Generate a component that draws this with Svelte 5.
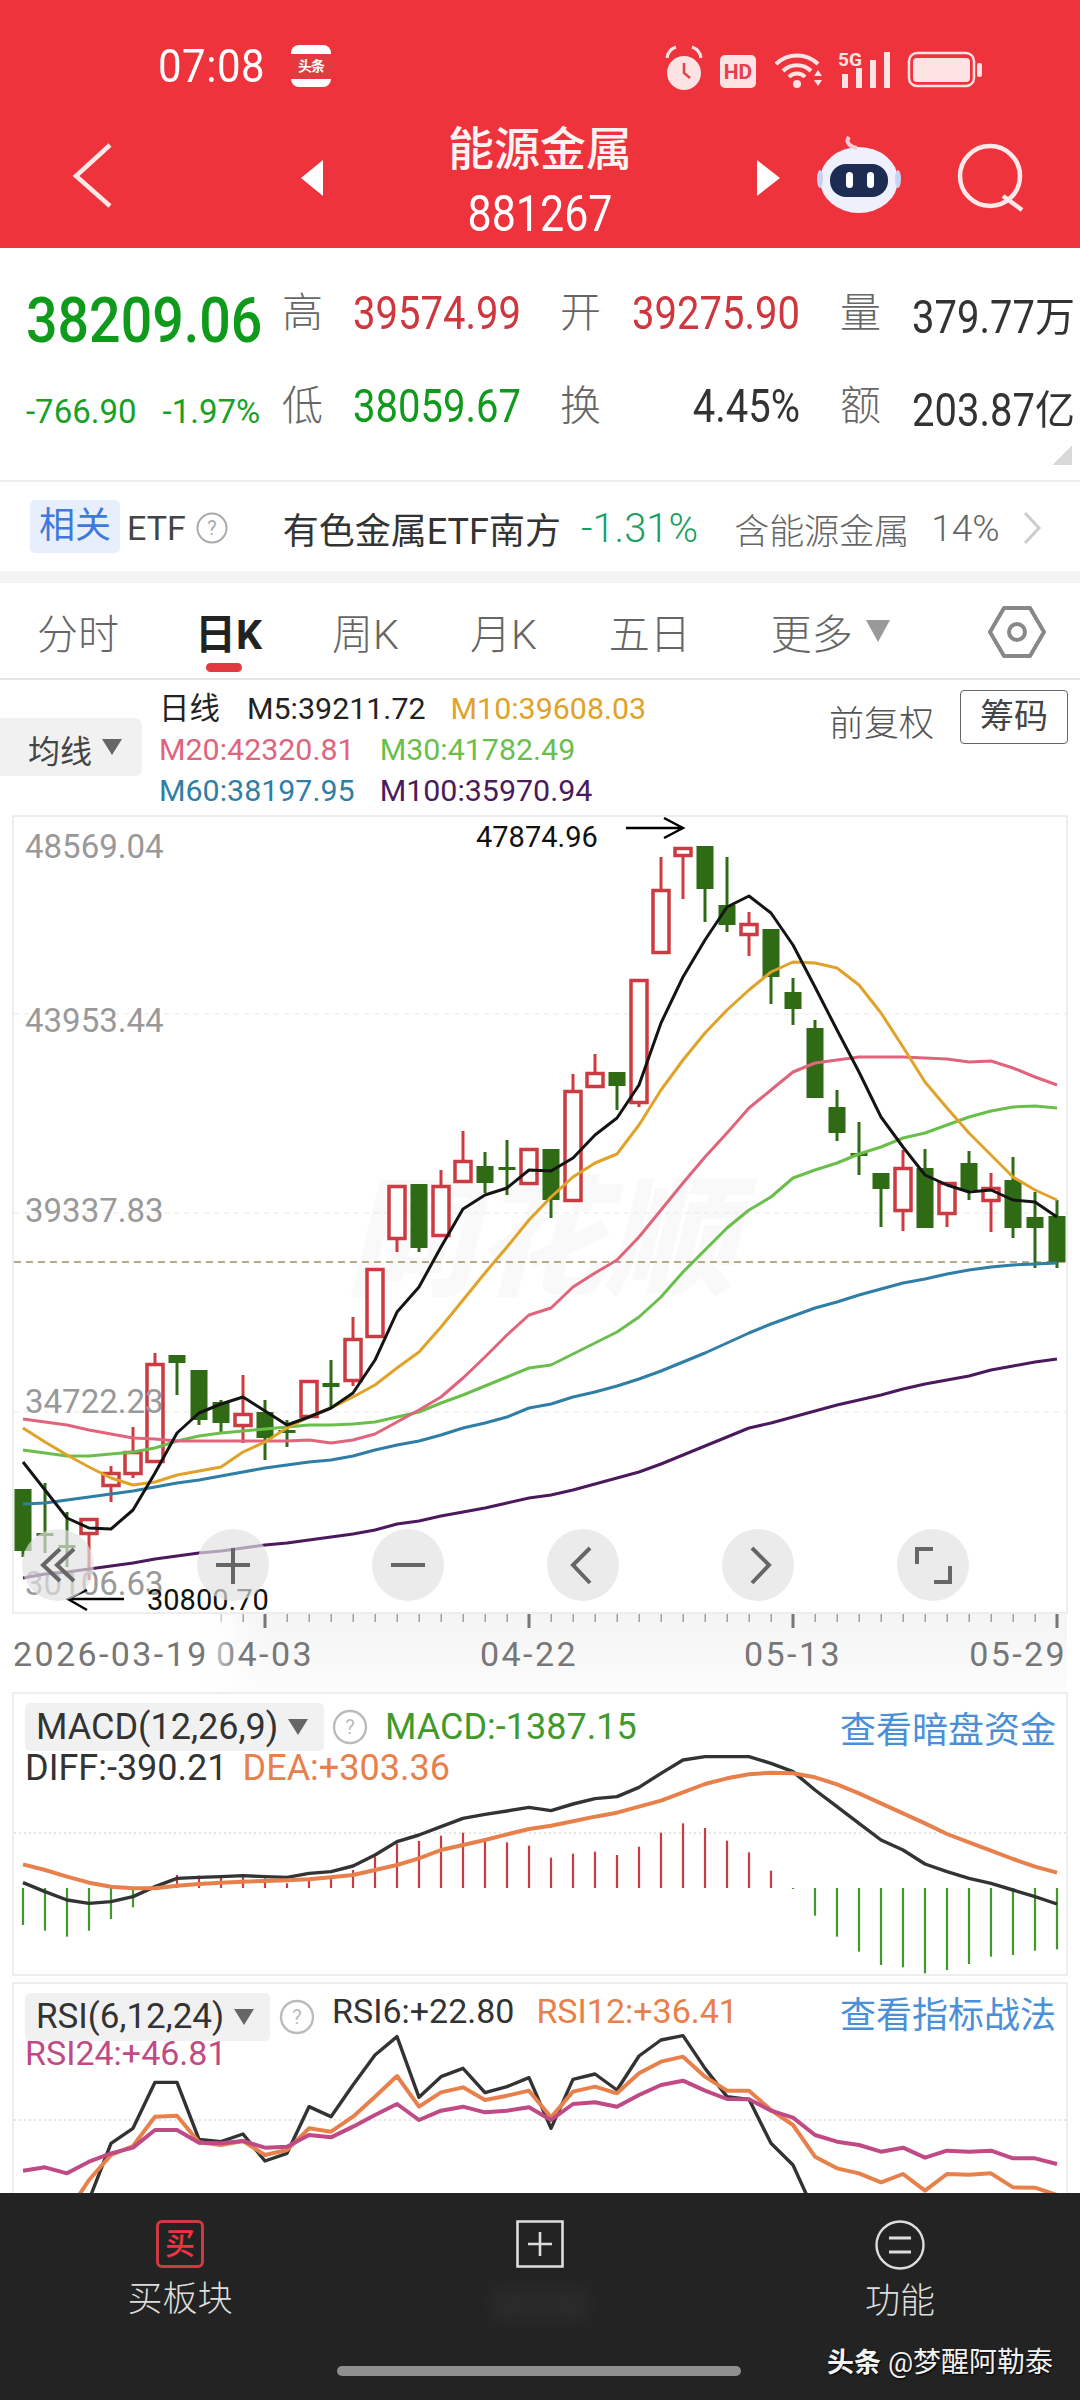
<script>
  const X = (i) => 23 + 22 * i;
  const R = '#cc3b41', G = '#2f6b14';
  // [kind, high, top, bottom, low]
  const candles = [
    [G,1489,1489,1551,1557],[G,1483,1533,1536,1553],[G,1512,1545,1548,1567],[R,1518,1518,1535,1580],
    [R,1466,1472,1487,1502],[R,1427,1451,1475,1478],[R,1353,1363,1463,1463],[G,1355,1355,1363,1395],
    [G,1370,1370,1420,1425],[G,1400,1402,1423,1432],[R,1375,1413,1427,1443],[G,1400,1412,1438,1460],
    [G,1420,1430,1433,1447],[R,1380,1380,1418,1418],[G,1360,1383,1387,1407],[R,1317,1338,1382,1386],
    [R,1268,1268,1338,1338],[R,1185,1185,1240,1252],[G,1184,1184,1248,1252],[R,1170,1185,1237,1237],
    [R,1131,1160,1183,1183],[G,1152,1166,1183,1193],[G,1140,1167,1170,1195],[R,1148,1148,1185,1185],
    [G,1149,1149,1200,1218],[R,1074,1090,1202,1202],[R,1054,1072,1088,1088],[G,1072,1072,1086,1110],
    [R,979,979,1104,1107],[R,857,889,954,954],[R,847,847,857,899],[G,846,846,889,922],
    [G,857,905,925,932],[R,912,923,936,956],[G,929,929,977,1004],[G,978,992,1009,1025],
    [G,1020,1028,1098,1098],[G,1090,1107,1133,1141],[G,1122,1153,1156,1175],[G,1173,1173,1189,1227],
    [R,1150,1167,1212,1231],[G,1149,1168,1228,1228],[R,1182,1182,1215,1227],[G,1151,1163,1190,1200],
    [R,1173,1187,1202,1232],[G,1157,1180,1228,1238],[G,1192,1217,1228,1268],[G,1200,1216,1262,1268]
  ];
  const line = (arr) => arr.map((y, i) => `${X(i)},${y}`).join(' ');
  const m5 = [1462,1490,1518,1528,1529,1510,1473,1433,1413,1404,1397,1411,1425,1417,1408,1393,1360,1312,1287,1247,1209,1195,1188,1170,1171,1158,1135,1118,1085,1023,977,940,907,896,913,945,987,1030,1072,1117,1147,1175,1185,1192,1190,1200,1202,1217];
  const m10 = [1428,1442,1455,1467,1478,1485,1482,1475,1471,1467,1452,1442,1428,1417,1408,1397,1385,1368,1352,1327,1300,1273,1247,1220,1197,1177,1163,1154,1125,1090,1060,1033,1010,990,972,962,963,968,985,1013,1047,1082,1108,1133,1155,1177,1190,1200];
  const m20 = [1419,1422,1425,1430,1434,1438,1439,1441,1441,1441,1441,1441,1441,1440,1443,1440,1434,1422,1410,1397,1378,1357,1335,1315,1308,1287,1273,1260,1237,1210,1183,1157,1133,1108,1090,1072,1063,1060,1057,1057,1057,1058,1059,1062,1061,1068,1077,1085];
  const m30 = [1450,1453,1456,1456,1454,1452,1448,1441,1436,1433,1431,1429,1427,1425,1425,1424,1422,1417,1412,1403,1395,1386,1377,1368,1365,1354,1343,1332,1317,1297,1272,1250,1228,1210,1197,1178,1170,1163,1154,1147,1138,1133,1125,1117,1111,1107,1106,1108];
  const m60 = [1504,1503,1500,1497,1494,1491,1487,1483,1480,1476,1472,1468,1465,1462,1460,1456,1450,1445,1441,1435,1428,1423,1417,1408,1404,1397,1392,1386,1379,1371,1362,1353,1343,1333,1324,1316,1308,1302,1295,1289,1283,1279,1274,1270,1267,1265,1264,1263];
  const m100 = [1578,1574,1572,1569,1566,1563,1559,1556,1553,1551,1548,1545,1543,1540,1537,1534,1530,1524,1521,1516,1512,1508,1503,1498,1495,1490,1484,1478,1472,1464,1455,1446,1437,1428,1423,1417,1411,1405,1400,1395,1389,1384,1380,1376,1370,1366,1362,1359];
  const maLines = [
    { d: m100, c: '#4b1a5c' }, { d: m60, c: '#2f7ea5' }, { d: m30, c: '#6abf4b' },
    { d: m20, c: '#e0647c' }, { d: m10, c: '#e0a228' }, { d: m5, c: '#141414' }
  ];
  const priceLabels = [['48569.04',858],['43953.44',1032],['39337.83',1222],['34722.23',1413],['30106.63',1595]];

  const my = (v) => 1680 + v / 3;
  const ry = (v) => 1980 + v / 3;
  const hist = [735,752,770,752,717,682,null,585,587,590,585,595,610,597,590,570,530,490,483,467,458,475,487,497,533,521,515,525,500,458,430,444,482,517,572,627,707,770,815,855,862,880,870,852,830,825,812,808];
  const diff = [608,635,660,670,665,650,620,595,592,590,587,590,592,580,575,558,525,485,465,440,415,403,393,382,392,372,356,350,322,280,240,230,230,230,250,275,330,380,430,480,510,552,575,595,610,630,650,672];
  const dea = [553,570,590,608,620,625,625,617,612,608,605,603,601,598,592,585,570,555,535,510,495,480,463,447,437,424,410,398,380,362,337,312,295,283,278,280,292,313,340,370,400,430,462,487,512,537,560,578];
  const rsi6 = [900,900,800,660,490,445,307,307,478,485,462,543,520,380,410,315,225,170,352,290,265,338,320,293,445,298,282,330,228,180,167,265,350,358,490,555,700,800,850,900,900,900,900,900,900,900,900,900];
  const rsi12 = [750,750,700,600,525,498,410,407,487,495,483,525,510,445,455,410,350,288,380,337,322,360,347,332,412,335,320,340,280,245,230,290,332,332,390,435,530,565,580,607,582,632,582,584,580,622,623,645];
  const rsi24 = [572,562,580,545,520,503,450,450,488,490,483,503,500,465,472,440,405,372,420,392,380,397,392,382,420,372,367,380,345,315,302,332,357,358,392,413,465,485,495,515,503,533,512,515,512,535,535,552];
  const pl = (arr, f) => arr.map((v, i) => `${X(i)},${f(v)}`).join(' ');

  const ticks = Array.from({ length: 39 }, (_, k) => 9 + k);
  const major = [11, 23, 35, 47];
  const axisLabels = [['04-03',265],['04-22',529],['05-13',793]];
  const tabs = [
    { t: '分时', m: 37 }, { t: '日K', m: 76, on: true }, { t: '周K', m: 70 },
    { t: '月K', m: 71 }, { t: '五日', m: 72 }, { t: '更多', m: 80 }
  ];
</script>

<div class="page">
  <header class="head">
    <div class="status">
      <span class="time">07:08</span>
      <span class="tt"><span>头条</span></span>
      <svg class="sicons" width="330" height="50" viewBox="660 44 330 50">
        <g fill="#fde3e3">
          <circle cx="684" cy="73" r="17"/>
          <path d="M667 58q1-8 9-11M692 47q8 3 9 11" fill="none" stroke="#fde3e3" stroke-width="3"/>
          <path d="M684 63v10l6 5" fill="none" stroke="#e8404a" stroke-width="2.5"/>
          <rect x="720" y="55" width="36" height="33" rx="5"/>
          <circle cx="797" cy="84" r="4"/>
          <path d="M776 64a30 30 0 0 1 42 0M783 71a20 20 0 0 1 28 0M789 77a11 11 0 0 1 16 0" fill="none" stroke="#fde3e3" stroke-width="4"/>
          <path d="M814 76l4-6 4 6zM814 80l4 6 4-6z"/>
          <rect x="842" y="74" width="6" height="14"/><rect x="856" y="68" width="6" height="20"/>
          <rect x="870" y="60" width="6" height="28"/><rect x="884" y="52" width="6" height="36"/>
          <rect x="913" y="58" width="57" height="24" rx="4"/>
          <rect x="977" y="63" width="5" height="14" rx="2"/>
        </g>
        <text class="hd" x="738" y="79" text-anchor="middle">HD</text>
        <text class="fg" x="838" y="66">5G</text>
        <rect x="909" y="53" width="65" height="33" rx="8" fill="none" stroke="#fde3e3" stroke-width="2.5"/>
      </svg>
    </div>
    <div class="nav">
      <svg class="nav-svg" width="1080" height="128" viewBox="0 120 1080 128">
        <path d="M110 145L76 176L110 206" fill="none" stroke="#ffe8e8" stroke-width="4.5"/>
        <path d="M323 160v36l-22-18z" fill="#fff"/>
        <path d="M757 160v36l23-18z" fill="#fff"/>
        <ellipse cx="859" cy="180" rx="39" ry="33" fill="#eef0fb"/>
        <path d="M857 148c-7-1-12-6-8-11" fill="none" stroke="#f3c9d6" stroke-width="4"/>
        <ellipse cx="820" cy="179" rx="3" ry="9" fill="#c8d2f4"/>
        <ellipse cx="898" cy="179" rx="3" ry="9" fill="#c8d2f4"/>
        <rect x="830" y="164" width="58" height="33" rx="16" fill="#1c2c52"/>
        <rect x="846" y="172" width="7" height="16" rx="3.5" fill="#fff"/>
        <rect x="867" y="172" width="7" height="16" rx="3.5" fill="#fff"/>
        <circle cx="990" cy="176" r="30" fill="none" stroke="#ffe8e8" stroke-width="4.5"/>
        <path d="M1003 196l19 14" fill="none" stroke="#ffe8e8" stroke-width="4.5"/>
      </svg>
      <div class="title">能源金属</div>
      <div class="code">881267</div>
    </div>
  </header>

  <section class="quote">
    <div class="q-left">
      <div class="price">38209.06</div>
      <div class="delta"><span>-766.90</span><span>-1.97%</span></div>
    </div>
    <div class="stats">
      <span class="lb">高</span><span class="v up">39574.99</span>
      <span class="lb">开</span><span class="v up">39275.90</span>
      <span class="lb">量</span><span class="v dk">379.77<span class="unit">万</span></span>
      <span class="lb">低</span><span class="v dn">38059.67</span>
      <span class="lb">换</span><span class="v dk end">4.45%</span>
      <span class="lb">额</span><span class="v dk">203.87<span class="unit">亿</span></span>
    </div>
    <i class="corner"></i>
  </section>

  <section class="etf">
    <span class="pill">相关</span>
    <span class="etf-t">ETF</span>
    <svg class="qm" width="32" height="32" viewBox="0 0 32 32"><circle cx="16" cy="16" r="14.5" fill="none" stroke="#aaa" stroke-width="2"/><text x="16" y="23" text-anchor="middle" fill="#aaa" font-size="20" font-family="Roboto">?</text></svg>
    <span class="etf-n">有色金属ETF南方</span>
    <span class="etf-p">-1.31%</span>
    <span class="etf-h">含能源金属</span>
    <span class="etf-r">14%</span>
    <svg class="chev" width="20" height="34" viewBox="0 0 20 34"><path d="M3 2l14 15L3 32" fill="none" stroke="#ccc" stroke-width="3"/></svg>
  </section>
  <div class="band"></div>

  <nav class="tabs">
    {#each tabs as tab}
      <span class="tab" class:on={tab.on} style="margin-left:{tab.m}px">{tab.t}{#if tab.on}<i class="ind"></i>{/if}</span>
    {/each}
    <i class="tri"></i>
    <svg class="hex" width="58" height="54" viewBox="0 0 58 54"><path d="M16 3h26l14 24-14 24H16L2 27z" fill="none" stroke="#888" stroke-width="4" stroke-linejoin="round"/><circle cx="29" cy="27" r="8" fill="none" stroke="#888" stroke-width="4"/></svg>
  </nav>

  <section class="legend">
    <div class="ma-btn"><span class="ma-t">均线</span><i class="tri2"></i></div>
    <div class="ma-lines">
      <div class="ma-row"><span class="dk2 cjk">日线</span><span class="dk2">M5:39211.72</span><span class="c10">M10:39608.03</span></div>
      <div class="ma-row wide"><span class="c20">M20:42320.81</span><span class="c30">M30:41782.49</span></div>
      <div class="ma-row wide"><span class="c60">M60:38197.95</span><span class="c100">M100:35970.94</span></div>
    </div>
    <span class="fq">前复权</span>
    <span class="cm">筹码</span>
  </section>

  <section class="kline">
    <svg width="1052" height="795" viewBox="14 817 1052 795">
      <text class="wm" x="345" y="1285" textLength="390" lengthAdjust="spacingAndGlyphs">同花顺</text>
      <line x1="14" x2="1066" y1="1014" y2="1014" class="dash"/>
      <line x1="14" x2="1066" y1="1213" y2="1213" class="dash"/>
      <line x1="14" x2="1066" y1="1412" y2="1412" class="dash"/>
      <line x1="14" x2="1066" y1="1262" y2="1262" class="pline"/>
      {#each candles as [c, h, t, b, l], i}
        <line x1={X(i)} x2={X(i)} y1={h} y2={l} stroke={c} stroke-width="3"/>
        {#if c === R}
          <rect x={X(i) - 8} y={t + 1.5} width="16" height={Math.max(b - t - 3, 1)} fill="#fff" stroke={c} stroke-width="3.5"/>
        {:else}
          <rect x={X(i) - 8.5} y={t} width="17" height={b - t} fill={c}/>
        {/if}
      {/each}
      {#each priceLabels as [t, y]}
        <text class="pl" x="25" y={y}>{t}</text>
      {/each}
      {#each maLines as ma}
        <polyline points={line(ma.d)} fill="none" stroke={ma.c} stroke-width="3" stroke-linejoin="round"/>
      {/each}
      <text class="ann" x="476" y="847">47874.96</text>
      <path d="M626 828H683M664 818L683 828L664 838" fill="none" stroke="#000" stroke-width="2.4"/>
      <text class="ann" x="147" y="1610">30800.70</text>
      <path d="M124 1599H68M87 1590L68 1599L87 1610" fill="none" stroke="#000" stroke-width="2.4"/>
    </svg>
    <div class="zoom-btns">
      <span class="zb"><svg width="72" height="72" viewBox="0 0 72 72"><path d="M38 20L21 36l17 16M52 20L35 36l17 16" class="zi"/></svg></span>
      <span class="zb"><svg width="72" height="72" viewBox="0 0 72 72"><path d="M36 19v36M19 36h34" class="zi"/></svg></span>
      <span class="zb"><svg width="72" height="72" viewBox="0 0 72 72"><path d="M19 36h34" class="zi"/></svg></span>
      <span class="zb"><svg width="72" height="72" viewBox="0 0 72 72"><path d="M43 19L26 36l17 18" class="zi"/></svg></span>
      <span class="zb"><svg width="72" height="72" viewBox="0 0 72 72"><path d="M30 19l17 17-17 18" class="zi"/></svg></span>
      <span class="zb"><svg width="72" height="72" viewBox="0 0 72 72"><path d="M20 35V20h16M53 37v16H37" class="zi"/></svg></span>
    </div>
  </section>

  <section class="axis">
    <svg width="1080" height="80" viewBox="0 1612 1080 80">
      {#each ticks as k}
        {#if major.includes(k)}
          <rect x={X(k) - 1.5} y="1613" width="3" height="15" fill="#777"/>
        {:else}
          <rect x={X(k) - 0.5} y="1613" width="1.4" height="9" fill="#999"/>
        {/if}
      {/each}
      <defs>
        <linearGradient id="fade" x1="0" x2="1" y1="0" y2="0"><stop offset="0" stop-color="#fff"/><stop offset="1" stop-color="#fff" stop-opacity="0"/></linearGradient>
      </defs>
      {#each axisLabels as [t, x]}
        <text class="ax" x={x} y="1666" text-anchor="middle">{t}</text>
      {/each}
      <text class="ax" x="1067" y="1666" text-anchor="end">05-29</text>
      <rect x="196" y="1612" width="45" height="72" fill="url(#fade)"/>
      <text class="ax" x="13" y="1666">2026-03-19</text>
    </svg>
  </section>

  <section class="panel macd">
    <svg class="layer" width="1052" height="280" viewBox="14 1694 1052 280">
      <line x1="14" x2="1066" y1="1833" y2="1833" class="dot"/>
      {#each hist as v, i}
        {#if v !== null}
          <line x1={X(i)} x2={X(i)} y1="1888" y2={my(v)} stroke={v > 623 ? '#3f9a2b' : '#cc3b41'} stroke-width="2.2"/>
        {/if}
      {/each}
      <polyline points={pl(diff, my)} fill="none" stroke="#333" stroke-width="3.4" stroke-linejoin="round"/>
      <polyline points={pl(dea, my)} fill="none" stroke="#e8804c" stroke-width="4" stroke-linejoin="round"/>
    </svg>
    <div class="ph">
      <span class="sel macd-sel">MACD(12,26,9)<i class="tri2"></i></span>
      <svg class="pq" width="36" height="36" viewBox="0 0 36 36"><circle cx="18" cy="18" r="16" fill="#fff" stroke="#bbb" stroke-width="2.4"/><text x="18" y="25" text-anchor="middle" fill="#bbb" font-size="20" font-family="Roboto">?</text></svg>
      <span class="gr">MACD:-1387.15</span>
      <a class="lk">查看暗盘资金</a>
    </div>
    <div class="ph2"><span class="dkt">DIFF:-390.21</span><span class="or">DEA:+303.36</span></div>
  </section>

  <section class="panel rsi">
    <svg class="layer" width="1052" height="209" viewBox="14 1984 1052 209">
      <line x1="14" x2="1066" y1="2120" y2="2120" class="dot"/>
      <polyline points={pl(rsi6, ry)} fill="none" stroke="#333" stroke-width="3.4" stroke-linejoin="round"/>
      <polyline points={pl(rsi12, ry)} fill="none" stroke="#e8804c" stroke-width="4" stroke-linejoin="round"/>
      <polyline points={pl(rsi24, ry)} fill="none" stroke="#bf4a85" stroke-width="4" stroke-linejoin="round"/>
    </svg>
    <div class="ph rh">
      <span class="sel rsi-sel">RSI(6,12,24)<i class="tri2"></i></span>
      <svg class="pq rq" width="36" height="36" viewBox="0 0 36 36"><circle cx="18" cy="18" r="16" fill="#fff" stroke="#bbb" stroke-width="2.4"/><text x="18" y="25" text-anchor="middle" fill="#bbb" font-size="20" font-family="Roboto">?</text></svg>
      <span class="dkt r6">RSI6:+22.80</span>
      <span class="or r12">RSI12:+36.41</span>
      <a class="lk rl">查看指标战法</a>
    </div>
    <div class="ph2 r3"><span class="pk">RSI24:+46.81</span></div>
  </section>

  <footer class="foot">
    <div class="fi">
      <span class="buy"><span>买</span></span>
      <span class="fl">买板块</span>
    </div>
    <div class="fi">
      <svg width="48" height="48" viewBox="0 0 48 48"><path d="M1.5 1.5h45v45h-45zM24 12v24M12 24h24" fill="none" stroke="#ddd" stroke-width="2.6"/></svg>
      <i class="smudge"></i>
    </div>
    <div class="fi">
      <svg width="50" height="50" viewBox="0 0 50 50"><circle cx="25" cy="25" r="23.5" fill="none" stroke="#ddd" stroke-width="2.4"/><path d="M14 18h22M14 32h22" stroke="#ddd" stroke-width="3"/></svg>
      <span class="fl">功能</span>
    </div>
    <div class="wmk"><b>头条</b> @梦醒阿勒泰</div>
    <i class="home"></i>
  </footer>
</div>

<style>
  :global(body) { margin: 0; background: #fff; }
  .page { width: 1080px; height: 2400px; overflow: hidden; background: #fff; font-family: Roboto, "Noto Sans CJK SC", sans-serif; }
  i { display: block; font-style: normal; }

  .head { height: 248px; background: #ee333d; color: #fff; position: relative; }
  .status { height: 120px; display: flex; align-items: center; padding: 12px 0 0 158px; box-sizing: border-box; position: relative; }
  .time { font-size: 42px; color: #fff; letter-spacing: 0.5px; transform: scaleY(1.1); }
  .tt { margin-left: 26px; width: 40px; height: 42px; background: #fff; border-radius: 8px; display: flex; align-items: center; justify-content: center; }
  .tt span { width: 100%; height: 25px; background: #e23a3f; color: #fff; font-size: 14px; line-height: 25px; text-align: center; font-weight: 700; letter-spacing: -1px; }
  .sicons { position: absolute; left: 660px; top: 44px; }
  .hd { font: 700 21px Roboto, sans-serif; fill: #e8404a; }
  .fg { font: 700 19px Roboto, sans-serif; fill: #fde3e3; }
  .nav { position: relative; height: 128px; text-align: center; }
  .nav-svg { position: absolute; left: 0; top: 0; }
  .title { position: relative; font-size: 46px; font-weight: 500; line-height: 54px; padding-top: 2px; color: #fdf3f3; }
  .code { position: relative; font-size: 43px; line-height: 50px; margin-top: 12px; color: #fff; transform: scaleY(1.18); }

  .quote { height: 234px; box-sizing: border-box; border-bottom: 2px solid #eee; display: flex; position: relative; }
  .q-left { width: 282px; padding-left: 26px; box-sizing: border-box; }
  .price { font-size: 55.5px; line-height: 60px; font-weight: 500; color: #0f9a1b; margin-top: 44px; white-space: nowrap; transform: scaleY(1.12); }
  .delta { display: flex; gap: 26px; font-size: 33px; line-height: 36px; margin-top: 42px; color: #18a028; }
  .stats { display: grid; grid-template-columns: 71px 207px 72px 208px 72px auto; grid-auto-rows: 93px; align-items: center; margin-top: 19px; }
  .lb { font-size: 41px; color: #666; font-weight: 300; margin-top: -10px; }
  .v { font-size: 40px; white-space: nowrap; transform: scaleY(1.14); }
  .unit { display: inline-block; transform: scaleY(0.88); }
  .up { color: #cf363e; }
  .dn { color: #0f9a1b; }
  .dk { color: #333; }
  .end { justify-self: end; padding-right: 40px; }
  .corner { position: absolute; right: 8px; top: 197px; width: 20px; height: 20px; background: linear-gradient(135deg, transparent 50%, #d9d9d9 50%); }

  .etf { height: 89px; display: flex; align-items: center; padding: 3px 0 0 30px; box-sizing: border-box; }
  .pill { width: 90px; height: 53px; background: #e8effc; color: #4178dd; font-size: 36px; line-height: 53px; text-align: center; border-radius: 5px; margin-top: -3px; }
  .etf-t { margin-left: 7px; font-size: 34px; color: #444; }
  .qm { margin-left: 10px; }
  .etf-n { margin-left: 55px; font-size: 36px; color: #333; white-space: nowrap; }
  .etf-p { margin-left: 20px; font-size: 40px; color: #1aa062; font-weight: 300; }
  .etf-h { margin-left: 36px; font-size: 35px; color: #666; font-weight: 300; }
  .etf-r { margin-left: 22px; font-size: 37px; color: #666; font-weight: 300; }
  .chev { margin-left: 22px; }
  .band { height: 12px; background: #f4f4f4; }

  .tabs { height: 97px; border-bottom: 2px solid #e6e6e6; box-sizing: border-box; display: flex; align-items: center; position: relative; }
  .tab { font-size: 41px; color: #666; font-weight: 300; position: relative; white-space: nowrap; }
  .tab.on { color: #222; font-weight: 700; }
  .ind { position: absolute; left: 11px; top: 62px; width: 36px; height: 9px; background: #e23a3e; border-radius: 5px; }
  .tri { margin-left: 13px; width: 0; height: 0; border-left: 12px solid transparent; border-right: 12px solid transparent; border-top: 22px solid #999; }
  .hex { position: absolute; left: 988px; top: 22px; }

  .legend { height: 135px; display: flex; position: relative; }
  .ma-btn { margin-top: 38px; width: 142px; height: 58px; box-sizing: border-box; background: #f1f1f1; border-radius: 0 7px 7px 0; padding-left: 28px; font-size: 32px; line-height: 58px; color: #444; display: flex; align-items: center; }
  .ma-t { padding-top: 9px; }
  .tri2 { margin-left: 10px; width: 0; height: 0; border-left: 10px solid transparent; border-right: 10px solid transparent; border-top: 16px solid #666; }
  .ma-lines { padding: 8px 0 0 17px; font-size: 30.4px; line-height: 41px; white-space: nowrap; }
  .ma-row { display: flex; gap: 25px; }
  .ma-row.wide { gap: 25px; }
  .cjk { width: 63px; }
  .dk2 { color: #222; }
  .c10 { color: #e0a228; }
  .c20 { color: #e0647c; }
  .c30 { color: #6abf4b; }
  .c60 { color: #2f7ea5; }
  .c100 { color: #4b1a5c; }
  .fq { position: absolute; left: 829px; top: 22px; font-size: 35px; line-height: 46px; color: #555; font-weight: 300; }
  .cm { position: absolute; left: 960px; top: 10px; width: 108px; height: 54px; box-sizing: border-box; border: 1.5px solid #666; border-radius: 4px; font-size: 34px; line-height: 50px; text-align: center; color: #444; }

  .kline { margin: 0 12px; height: 799px; box-sizing: border-box; border: 2px solid #eee; position: relative; }
  .kline svg { display: block; overflow: visible; }
  .wm { font: italic 900 130px "Noto Sans CJK SC", sans-serif; fill: #f9f9f9; }
  .dash { stroke: #e8e8e8; stroke-width: 1.2; stroke-dasharray: 5 5; }
  .pline { stroke: #b8a98c; stroke-width: 2; stroke-dasharray: 7 5; }
  .pl { font: 400 33px Roboto, sans-serif; fill: #999; }
  .ann { font: 400 29px Roboto, sans-serif; fill: #111; }
  .zoom-btns { position: absolute; left: 8px; top: 712px; display: flex; gap: 103px; }
  .zb { width: 72px; height: 72px; border-radius: 50%; background: rgba(226, 226, 226, 0.68); display: block; }
  .zi { fill: none; stroke: #666; stroke-width: 4; }

  .axis { height: 80px; width: 1067px; margin-top: -2px; background: linear-gradient(90deg, #fff 0, #fff 200px, transparent 270px), linear-gradient(180deg, #f4f4f4, #fcfcfc); }
  .axis svg { display: block; }
  .ax { font: 400 34px Roboto, sans-serif; fill: #777; letter-spacing: 2.4px; }

  .panel { margin: 0 12px; box-sizing: border-box; border: 2px solid #eee; position: relative; overflow: hidden; background: #fff; }
  .macd { height: 284px; }
  .rsi { height: 211px; margin-top: 6px; border-bottom: 0; }
  .layer { position: absolute; left: 0; top: 0; }
  .dot { stroke: #ddd; stroke-width: 1.6; stroke-dasharray: 2 3; }
  .ph { position: relative; display: flex; align-items: center; padding: 9px 10px 0 11px; font-size: 36px; white-space: nowrap; height: 48px; }
  .rh { font-size: 34px; }
  .sel { background: #f1f1f1; border-radius: 5px; height: 48px; line-height: 48px; padding-left: 11px; box-sizing: border-box; display: flex; align-items: center; color: #333; }
  .macd-sel { width: 299px; }
  .rsi-sel { width: 245px; font-size: 35px; }
  .pq { margin-left: 8px; }
  .rq { margin-left: 9px; }
  .gr { margin-left: 17px; color: #3f9a2b; }
  .lk { margin-left: auto; color: #4a90d9; font-size: 36px; }
  .ph2 { position: relative; margin-top: -3px; padding-left: 11px; font-size: 36px; line-height: 40px; display: flex; gap: 15px; white-space: nowrap; }
  .dkt { color: #333; }
  .or { color: #e8804c; }
  .pk { color: #bf4a85; }
  .r6 { margin: -12px 0 0 17px; }
  .r12 { margin: -12px 0 0 22px; }
  .rl { margin-top: -10px; }
  .r3 { margin-top: -8px; font-size: 34px; }

  .foot { height: 207px; background: #232323; display: grid; grid-template-columns: repeat(3, 360px); position: relative; }
  .fi { display: flex; flex-direction: column; align-items: center; padding-top: 27px; }
  .fi svg { display: block; }
  .buy { width: 48px; height: 48px; box-sizing: border-box; border: 3px solid #cc3b41; border-radius: 6px; display: flex; align-items: center; justify-content: center; }
  .buy span { color: #ef3340; font-size: 30px; line-height: 1; font-weight: 500; }
  .fl { margin-top: 10px; font-size: 35px; line-height: 44px; color: #ddd; font-weight: 300; }
  .smudge { margin-top: 18px; width: 100px; height: 36px; background: #2a2a2a; filter: blur(7px); border-radius: 12px; }
  .wmk { position: absolute; left: 827px; top: 152px; font-size: 28px; line-height: 36px; color: #f2f2f2; white-space: nowrap; text-shadow: 1px 1px 2px #000; }
  .wmk b { font-size: 27px; font-weight: 700; }
  .home { position: absolute; left: 337px; top: 173px; width: 404px; height: 10px; border-radius: 5px; background: #8f8f8f; }
</style>
